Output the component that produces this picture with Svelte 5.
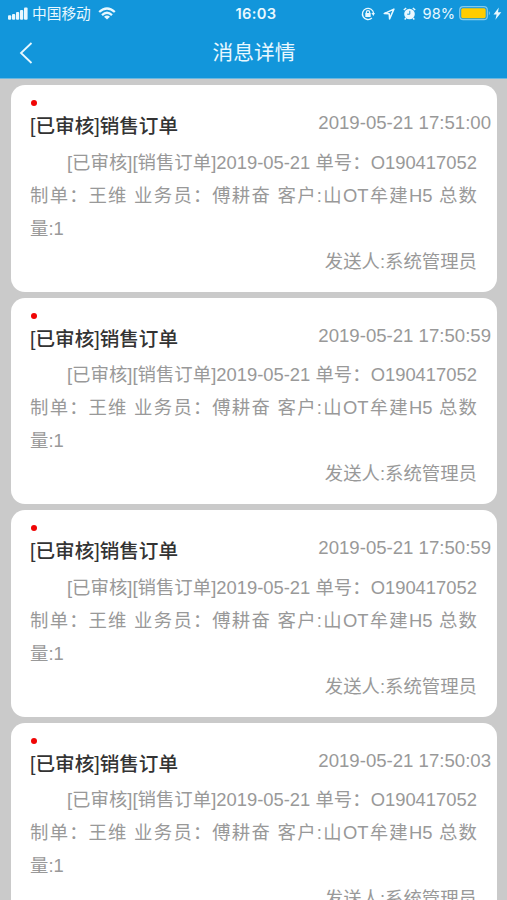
<script>
  const messages = [
    { id: 1, time: "2019-05-21 17:51:00" },
    { id: 2, time: "2019-05-21 17:50:59" },
    { id: 3, time: "2019-05-21 17:50:59" },
    { id: 4, time: "2019-05-21 17:50:03" },
  ].map((item) => ({
    ...item,
    title: "[已审核]销售订单",
    lines: [
      "[已审核][销售订单]2019-05-21 单号：O190417052",
      "制单： 王维 业务员： 傅耕奋 客户:山OT牟建H5 总数",
      "量:1",
    ],
    sender: "系统管理员",
  }));

  const battery = 98;
</script>

<div class="page">
  <header class="header">
    <div class="status">
      <div class="status__left">
        <svg class="signal" viewBox="0 0 20 13" aria-hidden="true">
          <rect x="0" y="8.3" width="3.2" height="4.5" rx="1" />
          <rect x="4" y="7" width="3.2" height="5.8" rx="1" />
          <rect x="8" y="5" width="3.2" height="7.8" rx="1" />
          <rect x="12" y="3" width="3.2" height="9.8" rx="1" />
          <rect x="16" y="0.5" width="3.6" height="12.3" rx="1" />
        </svg>
        <span class="carrier">中国移动</span>
        <svg class="wifi" viewBox="0 0 18 13" aria-hidden="true">
          <path d="M1.2 5 Q9 -2 16.8 5" />
          <path d="M4 8.2 Q9 3.4 14 8.2" />
          <path class="solid" d="M9 12.5 L6 9.8 Q9 7.4 12 9.8 Z" />
        </svg>
      </div>
      <span class="clock">16:03</span>
      <div class="status__right">
        <svg class="lock" viewBox="0 0 14 14" aria-hidden="true">
          <path d="M12.6 6.4 A5.6 5.6 0 1 0 10.9 11" />
          <path class="solid" d="M10.4 6 L14 6 L12.4 9 Z" />
          <path d="M5.4 6.5 V5.2 A1.6 1.6 0 0 1 8.6 5.2 V6.5" />
          <rect class="solid" x="4.3" y="6" width="5.4" height="4.1" rx="0.5" />
        </svg>
        <svg class="arrow" viewBox="0 0 12 12" aria-hidden="true">
          <path d="M1.2 5.6 L10.9 1.1 L6.6 10.9 L6.2 5.8 Z" />
        </svg>
        <svg class="alarm" viewBox="0 0 13 13" aria-hidden="true">
          <circle class="solid" cx="6.5" cy="7" r="5.3" />
          <path d="M0.8 3 L3.2 1 M12.2 3 L9.8 1 M3 11 L1.7 12.5 M10 11 L11.3 12.5" />
          <path class="hands" d="M6.8 3.8 V7.2 H4.2" />
        </svg>
        <span class="percent">{battery}%</span>
        <svg class="battery" viewBox="0 0 33 15" aria-hidden="true">
          <rect class="shell" x="0.7" y="0.7" width="27.6" height="13" rx="3.4" />
          <rect class="charge" x="2.2" y="2.2" width={battery * 0.25} height="10" rx="1.6" />
          <path class="cap" d="M29.8 5 Q32 7.2 29.8 9.5 Z" />
        </svg>
        <svg class="bolt" viewBox="0 0 9 13" aria-hidden="true">
          <path d="M5.8 0.5 L0.5 7.5 H3.6 L2.4 12.7 L8.3 5.3 H5 Z" />
        </svg>
      </div>
    </div>
    <nav class="nav">
      <button type="button" class="nav__back" aria-label="返回">
        <svg viewBox="0 0 14 22" aria-hidden="true">
          <path d="M12.5 1 L2 11 L12.5 21" />
        </svg>
      </button>
      <h1>消息详情</h1>
    </nav>
  </header>

  <main class="list">
    {#each messages as message (message.id)}
      <article class="card">
        <span class="card__dot"></span>
        <div class="card__head">
          <h2>{message.title}</h2>
          <time>{message.time}</time>
        </div>
        <p class="card__body">
          {#each message.lines as line}
            <span class="line">{#each line.split("： ") as part, i}{#if i > 0}<span class="colon">： </span>{/if}{part}{/each}</span>
          {/each}
        </p>
        <p class="card__sender">发送人:{message.sender}</p>
      </article>
    {/each}
  </main>
</div>

<style>
  :global(body) {
    background: #cacaca;
  }

  .page {
    height: 900px;
    overflow: hidden;
    font-family: "Liberation Sans", "Noto Sans CJK SC", sans-serif;
    color: #999999;
  }

  h1,
  h2,
  p {
    margin: 0;
    font-weight: 400;
  }

  svg {
    display: block;
    flex: none;
  }

  .header {
    box-sizing: border-box;
    height: 79px;
    background: #1296db;
    border-bottom: 1px solid #6bb8e0;
    color: #e8f8ff;
  }

  .status {
    display: grid;
    grid-template-columns: 1fr auto 1fr;
    align-items: center;
    height: 27px;
    padding: 0 5px 0 8px;
    fill: #e8f8ff;
  }

  .status__left,
  .status__right {
    display: flex;
    align-items: center;
  }

  .status__right {
    justify-content: flex-end;
  }

  .signal {
    width: 20px;
    height: 13px;
  }

  .carrier {
    margin-left: 4px;
    font-size: 14.7px;
    line-height: 20px;
  }

  .wifi {
    width: 18px;
    height: 13px;
    margin-left: 7px;
    fill: none;
    stroke: #e8f8ff;
    stroke-width: 2.3;
  }

  .solid {
    fill: #e8f8ff;
    stroke: none;
  }

  .clock {
    padding-left: 2px;
    font-family: Inter, sans-serif;
    font-size: 14.7px;
    font-weight: 600;
    letter-spacing: 0.3px;
  }

  .lock,
  .arrow,
  .alarm {
    fill: none;
    stroke: #e8f8ff;
    stroke-width: 1.5;
  }

  .lock {
    width: 14px;
    height: 14px;
    stroke-width: 1.3;
  }

  .arrow {
    width: 12px;
    height: 12px;
    margin-left: 8px;
    stroke-linejoin: round;
  }

  .alarm {
    width: 13px;
    height: 13px;
    margin-left: 8px;
  }

  .alarm .hands {
    stroke: #1296db;
    stroke-width: 1;
  }

  .percent {
    margin-left: 7px;
    font-family: Inter, sans-serif;
    font-size: 14.6px;
  }

  .battery {
    width: 33px;
    height: 15px;
    margin-left: 4px;
  }

  .shell {
    fill: none;
    stroke: #83caec;
    stroke-width: 1.2;
  }

  .charge {
    fill: #ffcc00;
  }

  .cap {
    fill: #83caec;
  }

  .bolt {
    width: 9px;
    height: 13px;
    margin-left: 1px;
  }

  .nav {
    display: grid;
    grid-template-columns: 60px 1fr 60px;
    align-items: center;
    height: 51px;
  }

  .nav__back {
    padding: 0 0 0 19px;
    border: none;
    background: none;
  }

  .nav__back svg {
    width: 14px;
    height: 22px;
    fill: none;
    stroke: #e8f8ff;
    stroke-width: 1.8;
  }

  .nav h1 {
    padding-left: 1px;
    font-size: 20.7px;
    line-height: 30px;
    text-align: center;
  }

  .list {
    display: flex;
    flex-direction: column;
    gap: 6px;
    padding: 6px 10px 0 11px;
  }

  .card {
    flex: none;
    box-sizing: border-box;
    height: 206.6px;
    padding: 15px 20px 0 19px;
    border-radius: 14px;
    background: #ffffff;
  }

  .card__dot {
    display: block;
    width: 6px;
    height: 6px;
    margin-left: 0.5px;
    border-radius: 50%;
    background: #f00505;
  }

  .card__head {
    display: flex;
    justify-content: space-between;
    height: 39.5px;
    margin-right: -14px;
    white-space: nowrap;
  }

  .card__head h2 {
    padding-top: 4px;
    font-size: 19.6px;
    font-weight: 500;
    line-height: 32px;
    color: #333333;
  }

  .card__head time {
    font-size: 18.6px;
    line-height: 34px;
  }

  .card__body,
  .card__sender {
    font-size: 18.4px;
    line-height: 33px;
  }

  .line {
    display: block;
    white-space: nowrap;
    text-align-last: justify;
  }

  .line:first-child {
    padding-left: 37px;
  }

  .line:last-child {
    text-align-last: left;
  }

  .colon {
    letter-spacing: -0.6px;
  }

  .card__sender {
    text-align: right;
  }
</style>
